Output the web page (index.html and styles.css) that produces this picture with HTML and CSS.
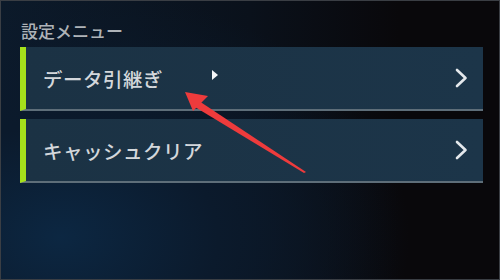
FILE: index.html
```html
<!DOCTYPE html>
<html lang="ja">
<head>
<meta charset="utf-8">
<link rel="stylesheet" href="styles.css">
</head>
<body>
<div class="screen">
  <div class="title">設定メニュー</div>
  <div class="menu">
    <div class="item">
      <span class="label">データ引継ぎ</span>
      <svg class="chev" viewBox="0 0 14 20" width="14" height="20"><path d="M3 2 L11.5 10 L3 18" fill="none" stroke="#e4e8ec" stroke-width="2.6" stroke-linecap="round" stroke-linejoin="round"/></svg>
    </div>
    <div class="item">
      <span class="label">キャッシュクリア</span>
      <svg class="chev" viewBox="0 0 14 20" width="14" height="20"><path d="M3 2 L11.5 10 L3 18" fill="none" stroke="#e4e8ec" stroke-width="2.6" stroke-linecap="round" stroke-linejoin="round"/></svg>
    </div>
  </div>
  <svg class="overlay" viewBox="0 0 500 280" width="500" height="280">
    <path d="M212 70 L212 80 L218 75 Z" fill="#f4f6f8"/>
    <path d="M199 101 L306 172 L304 173 L195 107 Z" fill="#ee3b3c"/>
    <path d="M185 92 L208 96 L193 111 Z" fill="#ee3b3c"/>
  </svg>
</div>
</body>
</html>
```
FILE: styles.css
```css
* { box-sizing: border-box; }
html, body { margin: 0; padding: 0; }
body { width: 500px; height: 280px; overflow: hidden; background: #08080b; }
.screen {
  position: relative;
  width: 500px;
  height: 280px;
  border: 1px solid #3a3e44;
  padding: 19px 16px 0 19px;
  font-family: "Noto Sans CJK JP", "Noto Sans", sans-serif;
  background:
    radial-gradient(ellipse 70% 90% at 12% 85%, #0c2742 0%, #0b1a2c 45%, rgba(9,10,14,0) 100%),
    linear-gradient(to right, #0c1a2a 0%, #0a111b 50%, #09080b 80%);
}
.title {
  color: #aeb3b8;
  font-size: 17px;
  font-weight: 500;
  line-height: 22px;
  margin-left: 1px;
}
.menu {
  margin-top: 5px;
  display: flex;
  flex-direction: column;
  gap: 8px;
}
.item {
  height: 64px;
  display: flex;
  align-items: center;
  justify-content: space-between;
  background: linear-gradient(to right, #1b3244, #1c3549);
  border-left: 6px solid #a5e11b;
  border-bottom: 2px solid #5e6e79;
  padding: 0 15px 0 17px;
}
.label {
  color: #d3d7db;
  font-size: 19.5px;
  font-weight: 500;
  letter-spacing: 0.5px;
}
.chev { display: block; }
.overlay { position: absolute; left: -1px; top: -1px; pointer-events: none; }
```
